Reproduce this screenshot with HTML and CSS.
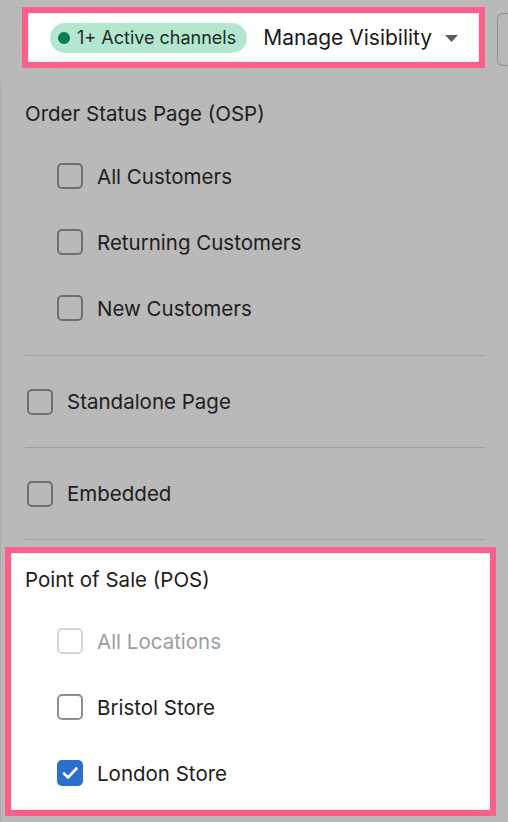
FILE: index.html
```html
<!DOCTYPE html>
<html lang="en">
<head>
<meta charset="utf-8">
<title>Manage Visibility</title>
<link rel="stylesheet" href="styles.css">
</head>
<body>
<div class="topbar">
  <div class="hl-top">
    <div class="hl-top-inner">
      <span class="badge"><span class="dot"></span>1+ Active channels</span>
      <span class="manage">Manage Visibility</span>
      <svg class="caret" width="13" height="7" viewBox="0 0 13 7"><path d="M0 0 H13 L6.5 7 Z" fill="#5d5d5d"/></svg>
    </div>
  </div>
  <div class="edge-btn"></div>
</div>

<div class="panel">
  <div class="section osp">
    <div class="heading">Order Status Page (OSP)</div>
    <div class="row sub"><span class="cb"></span><span class="label">All Customers</span></div>
    <div class="row sub"><span class="cb"></span><span class="label">Returning Customers</span></div>
    <div class="row sub"><span class="cb"></span><span class="label">New Customers</span></div>
  </div>
  <div class="divider"></div>
  <div class="section single">
    <div class="row top"><span class="cb"></span><span class="label">Standalone Page</span></div>
  </div>
  <div class="divider"></div>
  <div class="section single">
    <div class="row top"><span class="cb"></span><span class="label">Embedded</span></div>
  </div>
  <div class="divider"></div>

  <div class="hl-bottom">
    <div class="hl-bottom-inner">
      <div class="heading">Point of Sale (POS)</div>
      <div class="row sub"><span class="cb disabled"></span><span class="label muted">All Locations</span></div>
      <div class="row sub"><span class="cb light"></span><span class="label">Bristol Store</span></div>
      <div class="row sub"><span class="cb checked"><svg width="26" height="26" viewBox="0 0 26 26"><path d="M7 13.5 L11 17.5 L19.5 8.5" fill="none" stroke="#fff" stroke-width="2.6" stroke-linecap="round" stroke-linejoin="round"/></svg></span><span class="label">London Store</span></div>
    </div>
  </div>
</div>
</body>
</html>
```

FILE: styles.css
```css
* { box-sizing: border-box; }

html, body {
  margin: 0;
  padding: 0;
}

body {
  background: #b9b9b9;
  font-family: "Inter", "Noto Sans", sans-serif;
  font-size: 20.5px;
  color: #1d1d1d;
  width: 508px;
  height: 822px;
  overflow: hidden;
}

.topbar {
  display: flex;
  align-items: flex-start;
  padding: 7px 0 0 22px;
  height: 82px;
  overflow: hidden;
}

.hl-top {
  flex: none;
  width: 463px;
  height: 61px;
  border: 6px solid #fd5f8b;
  background: #fff;
}

.hl-top-inner {
  height: 100%;
  display: flex;
  align-items: center;
  padding-left: 22px;
  box-shadow: inset 0 0 2px rgba(0, 0, 0, 0.25);
}

.badge {
  display: inline-flex;
  align-items: center;
  height: 30px;
  padding: 0 11px 0 8px;
  border-radius: 15px;
  background: #b3e7d0;
  font-size: 18px;
  color: #1f2b26;
  white-space: nowrap;
}

.dot {
  width: 12px;
  height: 12px;
  border-radius: 50%;
  background: #0b7a57;
  margin-right: 7px;
}

.manage {
  margin-left: 16px;
  font-size: 21px;
  color: #1b1b1b;
  white-space: nowrap;
}

.caret {
  margin-left: 13px;
  margin-top: 1px;
}

.edge-btn {
  flex: none;
  margin-left: 12px;
  margin-top: 6px;
  width: 20px;
  height: 53px;
  border: 1px solid #8f8f8f;
  border-right: none;
  border-radius: 6px 0 0 6px;
}

.panel {
  border-left: 1px solid #adadad;
  height: 740px;
}

.heading {
  height: 28px;
  line-height: 28px;
  color: #1d1d1d;
}

.osp {
  padding: 18px 0 14px 24px;
}

.osp .heading { margin-bottom: 15px; }

.row {
  display: flex;
  align-items: center;
}

.row.sub {
  height: 66px;
  padding-left: 32px;
}

.row.top {
  height: 91px;
  padding-left: 26px;
}

.cb {
  width: 26px;
  height: 26px;
  flex: none;
  border: 2px solid #6c6f72;
  border-radius: 5px;
  margin-right: 14px;
}

.cb.light { border-color: #8d9093; }
.cb.disabled { border-color: #d3d5d8; }

.cb.checked {
  border: none;
  background: #2b6ecd;
}

.cb.checked svg { display: block; }

.label { white-space: nowrap; }
.label.muted { color: #9a9ea3; }

.divider {
  height: 1px;
  background: #a0a0a0;
  margin: 0 23px 0 24px;
}

.hl-bottom {
  margin: 7px 0 0 4px;
  width: 491px;
  height: 269px;
  border: 6px solid #fd5f8b;
  background: #fff;
}

.hl-bottom-inner {
  height: 100%;
  padding: 13px 0 0 14px;
  box-shadow: inset 0 0 2px rgba(0, 0, 0, 0.25);
}

.hl-bottom-inner .heading { margin-bottom: 14px; }

.hl-bottom-inner .row.sub { padding-left: 32px; }
```
